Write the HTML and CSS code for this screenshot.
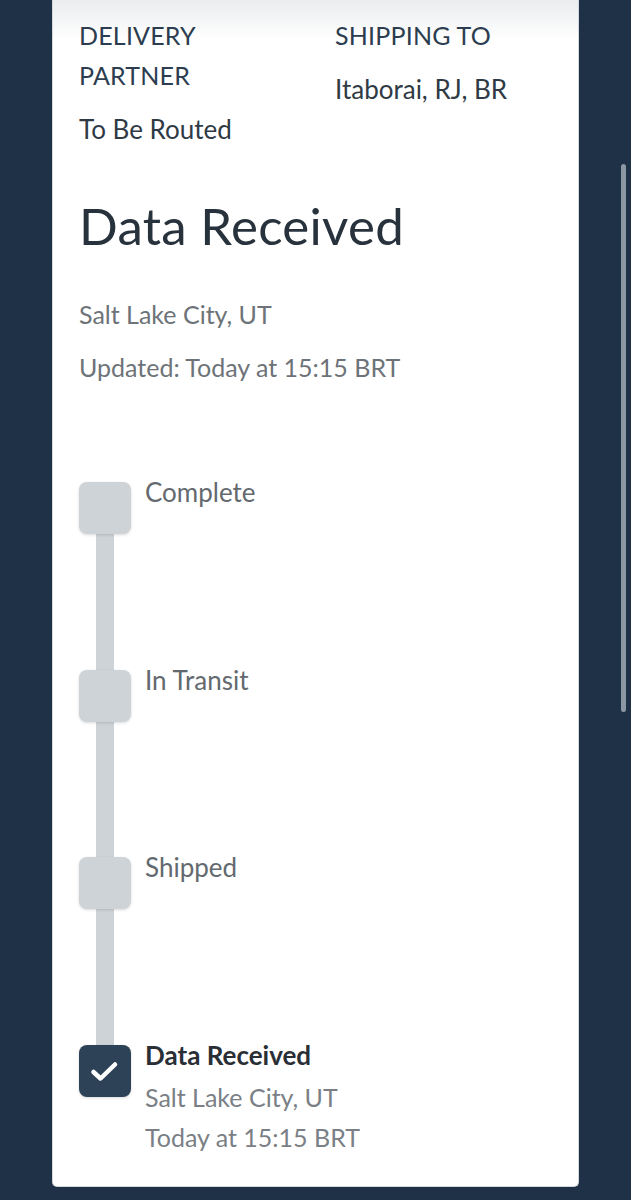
FILE: index.html
```html
<!DOCTYPE html>
<html lang="en">
<head>
    <meta charset="UTF-8">
    <meta name="viewport" content="width=device-width, initial-scale=1.0">
    <title>Tracking</title>
    <link rel="stylesheet" href="styles.css">
</head>
<body>

<div class="card">
    <div class="meta">
        <div class="meta-col">
            <div class="meta-label">DELIVERY PARTNER</div>
            <div class="meta-value">To Be Routed</div>
        </div>
        <div class="meta-col">
            <div class="meta-label">SHIPPING TO</div>
            <div class="meta-value">Itaborai, RJ, BR</div>
        </div>
    </div>

    <h1 class="status">Data Received</h1>
    <p class="status-line first">Salt Lake City, UT</p>
    <p class="status-line">Updated: Today at 15:15 BRT</p>

    <ul class="timeline">
        <li class="step">
            <div class="marker"><span class="box"></span><span class="line"></span></div>
            <div class="step-text">
                <div class="step-title">Complete</div>
            </div>
        </li>
        <li class="step">
            <div class="marker"><span class="box"></span><span class="line"></span></div>
            <div class="step-text">
                <div class="step-title">In Transit</div>
            </div>
        </li>
        <li class="step">
            <div class="marker"><span class="box"></span><span class="line"></span></div>
            <div class="step-text">
                <div class="step-title">Shipped</div>
            </div>
        </li>
        <li class="step done">
            <div class="marker">
                <span class="box">
                    <svg width="52" height="52" viewBox="0 0 52 52">
                        <polyline points="14.5,27 21.5,33.5 36,19.5" fill="none" stroke="#fff" stroke-width="4.5" stroke-linecap="round" stroke-linejoin="round"/>
                    </svg>
                </span>
            </div>
            <div class="step-text">
                <div class="step-title">Data Received</div>
                <div class="step-sub first">Salt Lake City, UT</div>
                <div class="step-sub">Today at 15:15 BRT</div>
            </div>
        </li>
    </ul>
</div>

<!-- overlay scrollbar -->
<div class="scroll-thumb"></div>

</body>
</html>
```

FILE: styles.css
```css
body {
    margin: 0;
    background-color: #1f3147;
    font-family: Lato, "Open Sans", sans-serif;
    height: 1200px;
    overflow: hidden;
}
.card {
    box-sizing: border-box;
    margin-left: 52px;
    width: 527px;
    background: linear-gradient(#eaecee, #ffffff 40px);
    border: 1px solid #d3d8dc;
    border-top: none;
    border-radius: 0 0 5px 5px;
    padding: 15px 0 29px 26px;
}

/* header */
.meta {
    display: flex;
    gap: 56px;
}
.meta-col {
    width: 200px;
}
.meta-label {
    color: #2c3d4f;
    font-size: 25px;
    line-height: 40px;
    letter-spacing: 0.2px;
}
.meta-value {
    color: #2f3a45;
    font-size: 26px;
    line-height: 40px;
    margin-top: 14px;
}

/* status */
.status {
    margin: 45px 0 0;
    font-size: 51px;
    line-height: 64px;
    font-weight: 400;
    color: #28323d;
    letter-spacing: 0.3px;
}
.status-line {
    margin: 13px 0 0;
    font-size: 25px;
    line-height: 40px;
    color: #6d7378;
}
.status-line.first {
    margin-top: 36px;
}

/* timeline */
.timeline {
    list-style: none;
    margin: 95px 0 0;
    padding: 0;
}
.step {
    display: flex;
    height: 187.5px;
}
.step.done {
    height: auto;
}
.marker {
    width: 52px;
    display: flex;
    flex-direction: column;
    align-items: center;
    margin-right: 14px;
}
.box {
    display: block;
    width: 52px;
    height: 52px;
    flex-shrink: 0;
    border-radius: 8px;
    background-color: #cdd3d7;
    box-shadow: 0 1px 3px rgba(0, 0, 0, 0.15);
    position: relative;
    z-index: 1;
}
.line {
    display: block;
    flex: 1;
    width: 18px;
    background-color: #cdd3d7;
}
.done .box {
    background-color: #2d4257;
}
.done .box svg {
    display: block;
}
.step-title {
    font-size: 26px;
    line-height: 20px;
    color: #63696e;
}
.done .step-title {
    font-weight: 700;
    color: #2a2f35;
}
.step-sub {
    font-size: 25px;
    line-height: 40px;
    color: #7a8085;
}
.step-sub.first {
    margin-top: 12px;
}

.scroll-thumb {
    position: fixed;
    left: 621px;
    top: 164px;
    width: 5px;
    height: 548px;
    border-radius: 3px;
    background-color: #8b98a4;
}
```
